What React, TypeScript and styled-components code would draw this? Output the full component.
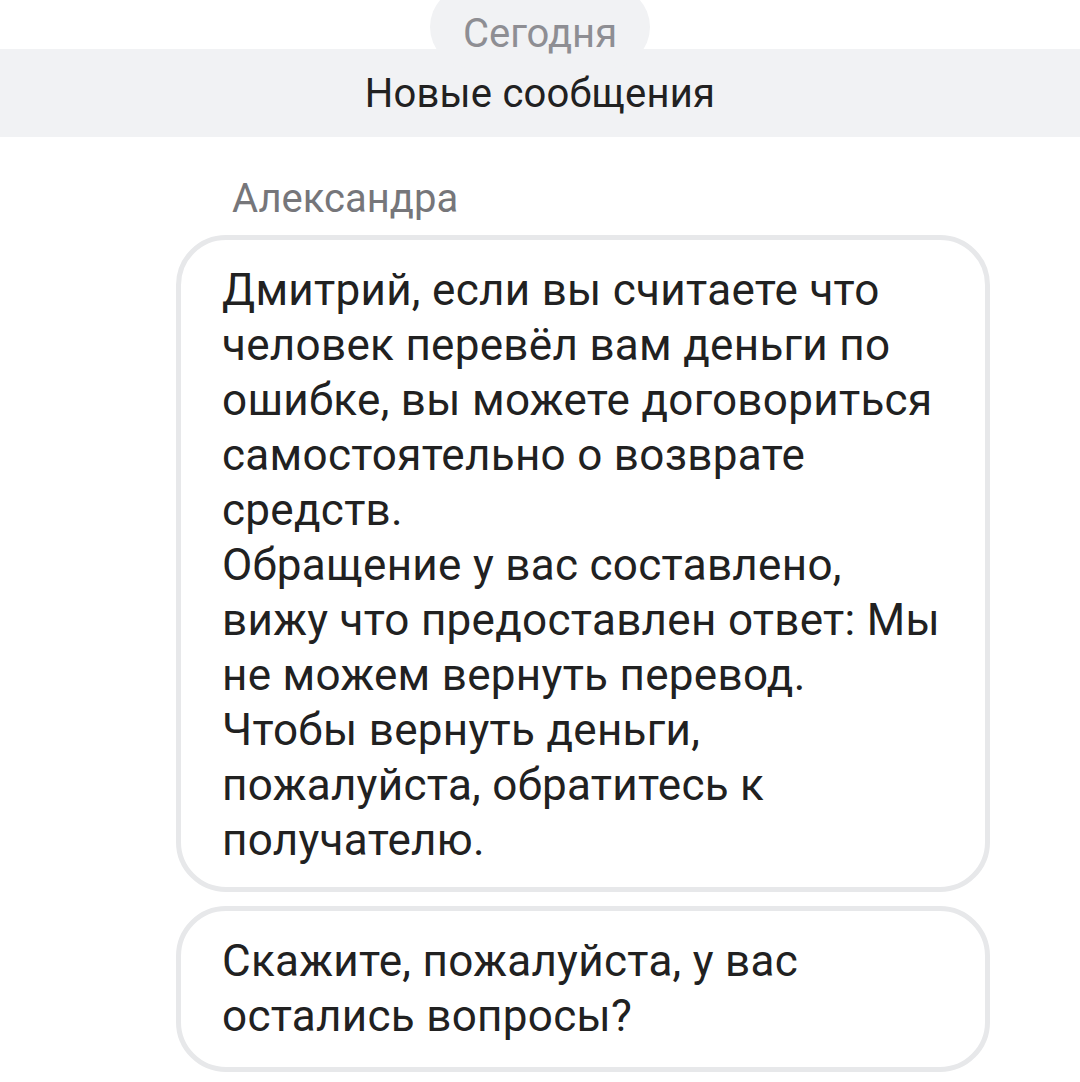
import React from "react";
import styled, { createGlobalStyle } from "styled-components";

const GlobalStyle = createGlobalStyle`
  html, body {
    margin: 0;
    padding: 0;
    background: #ffffff;
    font-family: Roboto, "Noto Sans", sans-serif;
  }
`;

const Screen = styled.div`
  width: 1080px;
  height: 1082px;
  overflow: hidden;
  background: #ffffff;
`;

const DateHeader = styled.div`
  position: relative;
  padding-top: 49px;
`;

const DatePill = styled.div`
  position: absolute;
  top: -14px;
  left: 430px;
  width: 220px;
  height: 82px;
  border-radius: 41px;
  background: #f1f2f4;
  display: flex;
  align-items: flex-end;
  justify-content: center;
  padding-bottom: 10px;
  box-sizing: border-box;
  font-size: 40px;
  line-height: 48px;
  color: #8e8e93;
  z-index: 1;
`;

const NewBand = styled.div`
  height: 88px;
  background: #f1f2f4;
  display: flex;
  align-items: center;
  justify-content: center;
  font-size: 40px;
  color: #212121;
  letter-spacing: 0.2px;
`;

const Feed = styled.div`
  padding: 40px 0 0 176px;
  display: flex;
  flex-direction: column;
  gap: 14px;
`;

const Author = styled.div`
  padding-left: 56px;
  font-size: 40px;
  line-height: 44px;
  color: #76767a;
`;

const Bubble = styled.div<{ $tail?: number }>`
  width: 814px;
  box-sizing: border-box;
  border: 5px solid #e7e8ea;
  border-radius: 50px;
  padding: 23px 43px ${(p) => p.$tail ?? 21}px 41px;
  font-size: 44px;
  line-height: 55px;
  color: #212121;
  letter-spacing: 0.3px;
`;

export default function App() {
  return (
    <Screen>
      <GlobalStyle />
      <DateHeader>
        <DatePill>Сегодня</DatePill>
        <NewBand>Новые сообщения</NewBand>
      </DateHeader>
      <Feed>
        <Author>Александра</Author>
        <Bubble $tail={19}>
          Дмитрий, если вы считаете что человек перевёл вам деньги по ошибке,
          вы можете договориться самостоятельно о возврате средств.
          <br />
          Обращение у вас составлено, вижу что предоставлен ответ: Мы не
          можем вернуть перевод.
          <br />
          Чтобы вернуть деньги, пожалуйста, обратитесь к получателю.
        </Bubble>
        <Bubble $tail={23}>Скажите, пожалуйста, у вас остались вопросы?</Bubble>
      </Feed>
    </Screen>
  );
}
